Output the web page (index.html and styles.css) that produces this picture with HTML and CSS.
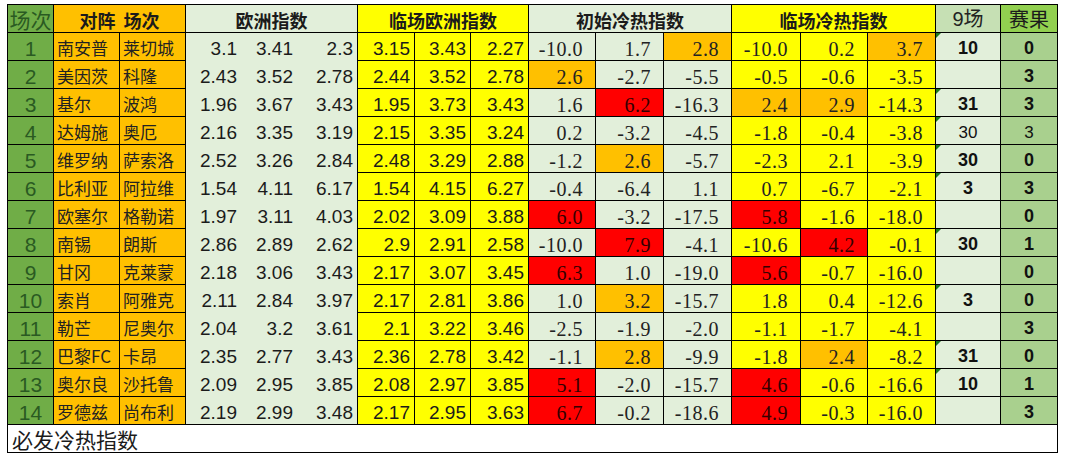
FILE: index.html
```html
<!DOCTYPE html>
<html lang="zh">
<head>
<meta charset="utf-8">
<title>必发冷热指数</title>
<link rel="stylesheet" href="styles.css">
</head>
<body>
<div class="sheet">
  <div class="row head">
    <div class="c no-h">场次</div>
    <div class="c h team-h">对阵&nbsp;&nbsp;场次</div>
    <div class="c h euro-h">欧洲指数</div>
    <div class="c h live-h">临场欧洲指数</div>
    <div class="c h init-h">初始冷热指数</div>
    <div class="c h hot-h">临场冷热指数</div>
    <div class="c nine-h">9场</div>
    <div class="c res-h">赛果</div>
  </div>

  <div class="euro">
    <span>3.1</span><span>3.41</span><span>2.3</span>
    <span>2.43</span><span>3.52</span><span>2.78</span>
    <span>1.96</span><span>3.67</span><span>3.43</span>
    <span>2.16</span><span>3.35</span><span>3.19</span>
    <span>2.52</span><span>3.26</span><span>2.84</span>
    <span>1.54</span><span>4.11</span><span>6.17</span>
    <span>1.97</span><span>3.11</span><span>4.03</span>
    <span>2.86</span><span>2.89</span><span>2.62</span>
    <span>2.18</span><span>3.06</span><span>3.43</span>
    <span>2.11</span><span>2.84</span><span>3.97</span>
    <span>2.04</span><span>3.2</span><span>3.61</span>
    <span>2.35</span><span>2.77</span><span>3.43</span>
    <span>2.09</span><span>2.95</span><span>3.85</span>
    <span>2.19</span><span>2.99</span><span>3.48</span>
  </div>

  <div class="row">
    <div class="c no">1</div><div class="c team">南安普</div><div class="c team">莱切城</div>
    <div class="c live">3.15</div><div class="c live">3.43</div><div class="c live">2.27</div>
    <div class="c init">-10.0</div><div class="c init">1.7</div><div class="c init org">2.8</div>
    <div class="c hot">-10.0</div><div class="c hot">0.2</div><div class="c hot org">3.7</div>
    <div class="c nine tri">10</div><div class="c res">0</div>
  </div>
  <div class="row">
    <div class="c no">2</div><div class="c team">美因茨</div><div class="c team">科隆</div>
    <div class="c live">2.44</div><div class="c live">3.52</div><div class="c live">2.78</div>
    <div class="c init org">2.6</div><div class="c init">-2.7</div><div class="c init">-5.5</div>
    <div class="c hot">-0.5</div><div class="c hot">-0.6</div><div class="c hot">-3.5</div>
    <div class="c nine"></div><div class="c res">3</div>
  </div>
  <div class="row">
    <div class="c no">3</div><div class="c team">基尔</div><div class="c team">波鸿</div>
    <div class="c live">1.95</div><div class="c live">3.73</div><div class="c live">3.43</div>
    <div class="c init">1.6</div><div class="c init red">6.2</div><div class="c init">-16.3</div>
    <div class="c hot org">2.4</div><div class="c hot org">2.9</div><div class="c hot">-14.3</div>
    <div class="c nine tri">31</div><div class="c res">3</div>
  </div>
  <div class="row">
    <div class="c no">4</div><div class="c team">达姆施</div><div class="c team">奥厄</div>
    <div class="c live">2.15</div><div class="c live">3.35</div><div class="c live">3.24</div>
    <div class="c init">0.2</div><div class="c init">-3.2</div><div class="c init">-4.5</div>
    <div class="c hot">-1.8</div><div class="c hot">-0.4</div><div class="c hot">-3.8</div>
    <div class="c nine tri light">30</div><div class="c res light">3</div>
  </div>
  <div class="row">
    <div class="c no">5</div><div class="c team">维罗纳</div><div class="c team">萨索洛</div>
    <div class="c live">2.48</div><div class="c live">3.29</div><div class="c live">2.88</div>
    <div class="c init">-1.2</div><div class="c init org">2.6</div><div class="c init">-5.7</div>
    <div class="c hot">-2.3</div><div class="c hot">2.1</div><div class="c hot">-3.9</div>
    <div class="c nine tri">30</div><div class="c res">0</div>
  </div>
  <div class="row">
    <div class="c no">6</div><div class="c team">比利亚</div><div class="c team">阿拉维</div>
    <div class="c live">1.54</div><div class="c live">4.15</div><div class="c live">6.27</div>
    <div class="c init">-0.4</div><div class="c init">-6.4</div><div class="c init">1.1</div>
    <div class="c hot">0.7</div><div class="c hot">-6.7</div><div class="c hot">-2.1</div>
    <div class="c nine tri">3</div><div class="c res">3</div>
  </div>
  <div class="row">
    <div class="c no">7</div><div class="c team">欧塞尔</div><div class="c team">格勒诺</div>
    <div class="c live">2.02</div><div class="c live">3.09</div><div class="c live">3.88</div>
    <div class="c init red">6.0</div><div class="c init">-3.2</div><div class="c init">-17.5</div>
    <div class="c hot red">5.8</div><div class="c hot">-1.6</div><div class="c hot">-18.0</div>
    <div class="c nine"></div><div class="c res">0</div>
  </div>
  <div class="row">
    <div class="c no">8</div><div class="c team">南锡</div><div class="c team">朗斯</div>
    <div class="c live">2.9</div><div class="c live">2.91</div><div class="c live">2.58</div>
    <div class="c init">-10.0</div><div class="c init red">7.9</div><div class="c init">-4.1</div>
    <div class="c hot">-10.6</div><div class="c hot red">4.2</div><div class="c hot">-0.1</div>
    <div class="c nine tri">30</div><div class="c res">1</div>
  </div>
  <div class="row">
    <div class="c no">9</div><div class="c team">甘冈</div><div class="c team">克莱蒙</div>
    <div class="c live">2.17</div><div class="c live">3.07</div><div class="c live">3.45</div>
    <div class="c init red">6.3</div><div class="c init">1.0</div><div class="c init">-19.0</div>
    <div class="c hot red">5.6</div><div class="c hot">-0.7</div><div class="c hot">-16.0</div>
    <div class="c nine"></div><div class="c res">0</div>
  </div>
  <div class="row">
    <div class="c no">10</div><div class="c team">索肖</div><div class="c team">阿雅克</div>
    <div class="c live">2.17</div><div class="c live">2.81</div><div class="c live">3.86</div>
    <div class="c init">1.0</div><div class="c init org">3.2</div><div class="c init">-15.7</div>
    <div class="c hot">1.8</div><div class="c hot">0.4</div><div class="c hot">-12.6</div>
    <div class="c nine tri">3</div><div class="c res">0</div>
  </div>
  <div class="row">
    <div class="c no">11</div><div class="c team">勒芒</div><div class="c team">尼奥尔</div>
    <div class="c live">2.1</div><div class="c live">3.22</div><div class="c live">3.46</div>
    <div class="c init">-2.5</div><div class="c init">-1.9</div><div class="c init">-2.0</div>
    <div class="c hot">-1.1</div><div class="c hot">-1.7</div><div class="c hot">-4.1</div>
    <div class="c nine"></div><div class="c res">3</div>
  </div>
  <div class="row">
    <div class="c no">12</div><div class="c team">巴黎FC</div><div class="c team">卡昂</div>
    <div class="c live">2.36</div><div class="c live">2.78</div><div class="c live">3.42</div>
    <div class="c init">-1.1</div><div class="c init org">2.8</div><div class="c init">-9.9</div>
    <div class="c hot">-1.8</div><div class="c hot org">2.4</div><div class="c hot">-8.2</div>
    <div class="c nine tri">31</div><div class="c res">0</div>
  </div>
  <div class="row">
    <div class="c no">13</div><div class="c team">奥尔良</div><div class="c team">沙托鲁</div>
    <div class="c live">2.08</div><div class="c live">2.97</div><div class="c live">3.85</div>
    <div class="c init red">5.1</div><div class="c init">-2.0</div><div class="c init">-15.7</div>
    <div class="c hot red">4.6</div><div class="c hot">-0.6</div><div class="c hot">-16.6</div>
    <div class="c nine tri">10</div><div class="c res">1</div>
  </div>
  <div class="row">
    <div class="c no">14</div><div class="c team">罗德兹</div><div class="c team">尚布利</div>
    <div class="c live">2.17</div><div class="c live">2.95</div><div class="c live">3.63</div>
    <div class="c init red">6.7</div><div class="c init">-0.2</div><div class="c init">-18.6</div>
    <div class="c hot red">4.9</div><div class="c hot">-0.3</div><div class="c hot">-16.0</div>
    <div class="c nine"></div><div class="c res">3</div>
  </div>

  <div class="c foot">必发冷热指数</div>
</div>
</body>
</html>
```

FILE: styles.css
```css
* { box-sizing: border-box; }

body {
  margin: 4px 0 0 7px;
  background: #fff;
  font-family: "Liberation Sans", Arial, "Noto Sans CJK SC", sans-serif;
  color: #1b1b1b;
}

.sheet {
  display: grid;
  width: 1051px;
  grid-template-columns: 45px 65px 65px 171px 56px 55px 57px 66px 67px 67px 68px 66px 67px 64px 56px;
  grid-auto-rows: 27px;
  gap: 1px;
  padding: 1px;
  background: #000;
}

.row { display: contents; }

.c {
  display: flex;
  align-items: center;
  padding: 3px 4px 0;
  white-space: nowrap;
  overflow: hidden;
  line-height: 1;
}

/* header */
.h {
  justify-content: center;
  font-family: "Noto Sans CJK SC", sans-serif;
  font-weight: 700;
  font-size: 18px;
  color: #1b1b1b;
}
.no-h {
  justify-content: center;
  background: #70ad47;
  color: #2a5a22;
  font-family: "Noto Sans CJK SC", sans-serif;
  font-size: 21px;
  padding: 1px 0 0;
}
.team-h { grid-column: span 2; background: #ffc000; }
.euro-h { background: #e2efda; }
.live-h { grid-column: span 3; background: #ffff00; }
.init-h { grid-column: span 3; background: #e2efda; }
.hot-h { grid-column: span 3; background: #ffff00; }
.nine-h {
  justify-content: center;
  background: #c6e0b4;
  font-family: "Liberation Sans", "Noto Sans CJK SC", sans-serif;
  font-size: 20px;
  color: #222;
  padding: 1px 0 0;
}
.res-h {
  justify-content: center;
  background: #92d050;
  font-family: "Noto Sans CJK SC", sans-serif;
  font-size: 20px;
  color: #1b1b1b;
  padding: 1px 0 0;
}

/* european odds block: one tall cell without inner borders */
.euro {
  grid-column: 4;
  grid-row: 2 / span 14;
  background: #e2efda;
  display: grid;
  grid-template-columns: 55px 56px 60px;
  grid-template-rows: repeat(14, 1fr);
  font-size: 19px;
}
.euro span {
  display: flex;
  align-items: center;
  justify-content: flex-end;
  padding: 4px 4px 0 0;
  line-height: 1;
}

/* body cells */
.no {
  justify-content: center;
  background: #70ad47;
  color: #2a5a22;
  font-size: 21px;
  padding: 4px 0 0;
}
.team {
  background: #ffc000;
  font-family: "Noto Sans CJK SC", sans-serif;
  font-size: 17px;
  padding: 2px 0 0 3px;
  color: #222;
}
.live {
  justify-content: flex-end;
  background: #ffff00;
  font-size: 19px;
  padding: 4px 4px 0 0;
}
.init, .hot {
  justify-content: flex-end;
  font-family: "Liberation Serif", "Times New Roman", serif;
  font-size: 20px;
  letter-spacing: 0.5px;
  padding: 4px 12px 0 0;
  color: #222;
}
.init { background: #e2efda; }
.hot { background: #ffff00; }
.org { background: #ffc000; }
.red { background: #ff0000; color: #300; }

.nine {
  position: relative;
  justify-content: center;
  background: #e2efda;
  font-weight: 700;
  font-size: 18px;
  color: #111;
  padding: 3px 0 0;
}
.tri::before {
  content: "";
  position: absolute;
  top: 0;
  left: 0;
  border-top: 5px solid #1e7b1e;
  border-right: 5px solid transparent;
}
.res {
  justify-content: center;
  background: #a9d08e;
  font-weight: 700;
  font-size: 18px;
  color: #111;
  padding: 3px 0 0;
}
.light { font-weight: 400; font-size: 17px; }

.foot {
  grid-column: 1 / -1;
  background: #fff;
  font-family: "Noto Sans CJK SC", sans-serif;
  font-size: 21px;
  line-height: 27px;
  padding: 2px 0 0 4px;
  overflow: visible;
  color: #1b1b1b;
}
```
